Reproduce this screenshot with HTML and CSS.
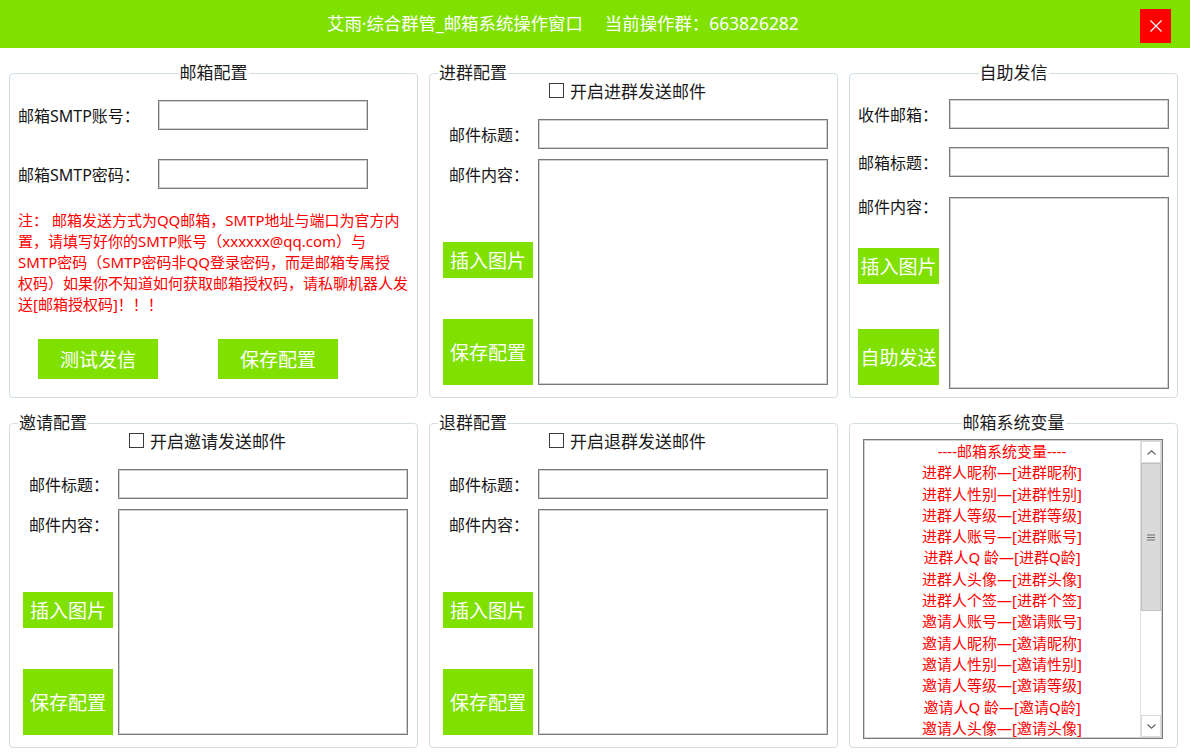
FILE: index.html
```html
<!DOCTYPE html>
<html lang="zh-CN">
<head>
<meta charset="utf-8">
<title>邮箱系统操作窗口</title>
<link rel="stylesheet" href="styles.css">
</head>
<body>
<div class="titlebar">
  <div class="title"><span>艾雨·综合群管_邮箱系统操作窗口</span><span class="grp">当前操作群：663826282</span></div>
  <button class="close" aria-label="关闭">
    <svg width="12" height="12" viewBox="0 0 12 12"><path d="M0.5 0.5 L11.5 11.5 M11.5 0.5 L0.5 11.5" stroke="#fff" stroke-width="1.2" fill="none"/></svg>
  </button>
</div>

<div class="main">
  <!-- 邮箱配置 -->
  <fieldset class="group">
    <legend class="center">邮箱配置</legend>
    <div class="pa-row r1"><span class="lbl">邮箱SMTP账号：</span><input class="tb" type="text"></div>
    <div class="pa-row r2"><span class="lbl">邮箱SMTP密码：</span><input class="tb" type="text"></div>
    <div class="note">注： 邮箱发送方式为QQ邮箱，SMTP地址与端口为官方内<br>置，请填写好你的SMTP账号（xxxxxx@qq.com）与<br>SMTP密码（SMTP密码非QQ登录密码，而是邮箱专属授<br>权码）如果你不知道如何获取邮箱授权码，请私聊机器人发<br>送[邮箱授权码]！！！</div>
    <div class="pa-btns"><button class="btn">测试发信</button><button class="btn">保存配置</button></div>
  </fieldset>

  <!-- 进群配置 -->
  <fieldset class="group">
    <legend class="left">进群配置</legend>
    <div class="cb-row"><input class="cb" type="checkbox"><span class="cb-text">开启进群发送邮件</span></div>
    <div class="frow"><span class="lbl">邮件标题：</span><input class="tb" type="text"></div>
    <div class="mrow">
      <div class="side"><span class="lbl">邮件内容：</span><button class="btn b1">插入图片</button><button class="btn b2">保存配置</button></div>
      <textarea class="ta"></textarea>
    </div>
  </fieldset>

  <!-- 自助发信 -->
  <fieldset class="group">
    <legend class="center">自助发信</legend>
    <div class="c-row r1"><span class="lbl">收件邮箱：</span><input class="tb" type="text"></div>
    <div class="c-row r2"><span class="lbl">邮箱标题：</span><input class="tb" type="text"></div>
    <div class="c-main">
      <div class="c-side"><span class="lbl">邮件内容：</span><button class="btn b1">插入图片</button><button class="btn b2">自助发送</button></div>
      <textarea class="ta"></textarea>
    </div>
  </fieldset>

  <!-- 邀请配置 -->
  <fieldset class="group">
    <legend class="left">邀请配置</legend>
    <div class="cb-row"><input class="cb" type="checkbox"><span class="cb-text">开启邀请发送邮件</span></div>
    <div class="frow"><span class="lbl">邮件标题：</span><input class="tb" type="text"></div>
    <div class="mrow">
      <div class="side"><span class="lbl">邮件内容：</span><button class="btn b1">插入图片</button><button class="btn b2">保存配置</button></div>
      <textarea class="ta"></textarea>
    </div>
  </fieldset>

  <!-- 退群配置 -->
  <fieldset class="group">
    <legend class="left">退群配置</legend>
    <div class="cb-row"><input class="cb" type="checkbox"><span class="cb-text">开启退群发送邮件</span></div>
    <div class="frow"><span class="lbl">邮件标题：</span><input class="tb" type="text"></div>
    <div class="mrow">
      <div class="side"><span class="lbl">邮件内容：</span><button class="btn b1">插入图片</button><button class="btn b2">保存配置</button></div>
      <textarea class="ta"></textarea>
    </div>
  </fieldset>

  <!-- 邮箱系统变量 -->
  <fieldset class="group">
    <legend class="center">邮箱系统变量</legend>
    <div class="listbox">
      <div class="items">
        <div>----邮箱系统变量----</div>
        <div>进群人昵称—[进群昵称]</div>
        <div>进群人性别—[进群性别]</div>
        <div>进群人等级—[进群等级]</div>
        <div>进群人账号—[进群账号]</div>
        <div>进群人Q 龄—[进群Q龄]</div>
        <div>进群人头像—[进群头像]</div>
        <div>进群人个签—[进群个签]</div>
        <div>邀请人账号—[邀请账号]</div>
        <div>邀请人昵称—[邀请昵称]</div>
        <div>邀请人性别—[邀请性别]</div>
        <div>邀请人等级—[邀请等级]</div>
        <div>邀请人Q 龄—[邀请Q龄]</div>
        <div>邀请人头像—[邀请头像]</div>
      </div>
      <div class="sb">
        <div class="sb-btn"><svg width="9" height="5" viewBox="0 0 9 5"><path d="M0.5 4.5 L4.5 0.8 L8.5 4.5" stroke="#606060" stroke-width="1.1" fill="none"/></svg></div>
        <div class="thumb"><svg width="8" height="7" viewBox="0 0 8 7"><path d="M0 1 H8 M0 3.5 H8 M0 6 H8" stroke="#6a6a6a" stroke-width="1.2"/></svg></div>
        <div class="track"></div>
        <div class="sb-btn"><svg width="9" height="5" viewBox="0 0 9 5"><path d="M0.5 0.5 L4.5 4.2 L8.5 0.5" stroke="#606060" stroke-width="1.1" fill="none"/></svg></div>
      </div>
    </div>
  </fieldset>
</div>
</body>
</html>
```

FILE: styles.css
```css
* { box-sizing: border-box; }
html, body { margin: 0; padding: 0; }
body {
  width: 1190px;
  height: 755px;
  overflow: hidden;
  background: #fff;
  font-family: "Noto Sans", "Noto Sans CJK SC", sans-serif;
  color: #151515;
}

/* title bar */
.titlebar {
  height: 48px;
  background: #80e000;
  display: flex;
  align-items: flex-start;
}
.title {
  margin-left: 327px;
  line-height: 46px;
  font-size: 17.4px;
  color: #fff;
  white-space: nowrap;
}
.title .grp { margin-left: 22px; }
.close {
  margin: 9px 19px 0 auto;
  width: 31px;
  height: 34px;
  background: #ff0000;
  border: none;
  padding: 0;
  display: flex;
  align-items: center;
  justify-content: center;
}

/* layout */
.main {
  display: grid;
  grid-template-columns: 409px 409px 329px;
  grid-template-rows: 335px 335px;
  column-gap: 11px;
  row-gap: 15px;
  padding: 15px 0 0 9px;
}
.group {
  margin: 0;
  padding: 0;
  min-width: 0;
  border: 1px solid #d3dde4;
  border-radius: 4px;
}
.group legend {
  font-size: 17px;
  line-height: 20px;
  padding: 0 1px;
  color: #1a1a1a;
  white-space: nowrap;
}
.group legend.center { margin: 0 auto; }
.group legend.left { margin-left: 8px; }

/* shared controls */
.lbl { font-size: 16px; white-space: nowrap; color: #151515; }
.tb, .ta {
  display: block;
  margin: 0;
  border: 1px solid #7a7a7a;
  box-shadow: inset 0 0 0 1px #d0d0d0;
  background: #fff;
  font-family: inherit;
  outline: none;
}
.tb { height: 30px; }
.ta { resize: none; }
.btn {
  display: block;
  border: none;
  padding: 0;
  margin: 0;
  background: #80e000;
  color: #fff;
  font-family: inherit;
  font-size: 19px;
  white-space: nowrap;
}

/* 邮箱配置 */
.pa-row { display: flex; align-items: center; padding-left: 8px; }
.pa-row .lbl { width: 140px; }
.pa-row .tb { width: 210px; }
.pa-row.r1 { margin-top: 17px; }
.pa-row.r2 { margin-top: 29px; }
.note {
  margin: 21px 0 0 8px;
  font-size: 15px;
  line-height: 21px;
  color: #ff0000;
  white-space: nowrap;
}
.pa-btns { display: flex; gap: 60px; padding-left: 28px; margin-top: 24px; }
.pa-btns .btn { width: 120px; height: 40px; }

/* 进群 / 邀请 / 退群 */
.cb-row { display: flex; align-items: center; height: 15px; padding-left: 119px; }
.cb {
  appearance: none;
  -webkit-appearance: none;
  width: 15px;
  height: 15px;
  margin: 0;
  border: 1px solid #3a3a3a;
  border-radius: 0;
  background: #fff;
}
.cb-text { margin-left: 6px; font-size: 17px; color: #1a1a1a; }
.frow { display: flex; align-items: center; padding-left: 19px; margin-top: 21px; }
.frow .lbl { width: 89px; }
.frow .tb { width: 290px; }
.mrow { display: flex; padding-left: 13px; margin-top: 10px; }
.side { width: 90px; margin-right: 5px; display: flex; flex-direction: column; }
.side .lbl { padding-left: 6px; line-height: 32px; }
.side .b1 { margin-top: 51px; height: 36px; }
.side .b2 { margin-top: 41px; height: 66px; }
.mrow .ta { width: 290px; height: 226px; }

/* 自助发信 */
.c-row { display: flex; align-items: center; padding-left: 8px; }
.c-row .lbl { width: 91px; }
.c-row .tb { width: 220px; }
.c-row.r1 { margin-top: 16px; }
.c-row.r2 { margin-top: 18px; }
.c-main { display: flex; padding-left: 8px; margin-top: 20px; }
.c-side { width: 81px; margin-right: 10px; display: flex; flex-direction: column; }
.c-side .lbl { line-height: 20px; }
.c-side .btn { width: 81px; }
.c-side .b1 { margin-top: 31px; height: 36px; }
.c-side .b2 { margin-top: 45px; height: 56px; }
.c-main .ta { width: 220px; height: 192px; }

/* 邮箱系统变量 */
.listbox {
  margin: 6px 0 0 13px;
  width: 300px;
  height: 300px;
  border: 1px solid #7a7a7a;
  box-shadow: inset 0 0 0 1px #d0d0d0;
  display: flex;
  background: #fff;
}
.items {
  flex: 1;
  overflow: hidden;
  text-align: center;
  color: #ff0000;
  font-size: 15px;
  line-height: 21.3px;
  padding-top: 1px;
  white-space: nowrap;
}
.sb {
  width: 21px;
  display: flex;
  flex-direction: column;
  border-left: 1px solid #e0e0e0;
  margin: 1px 1px 1px 0;
}
.sb-btn {
  height: 22px;
  border: 1px solid #dadada;
  display: flex;
  align-items: center;
  justify-content: center;
  background: #fff;
}
.thumb {
  height: 148px;
  background: #dadada;
  border: 1px solid #c2c2c2;
  display: flex;
  align-items: center;
  justify-content: center;
}
.track { flex: 1; }
```
